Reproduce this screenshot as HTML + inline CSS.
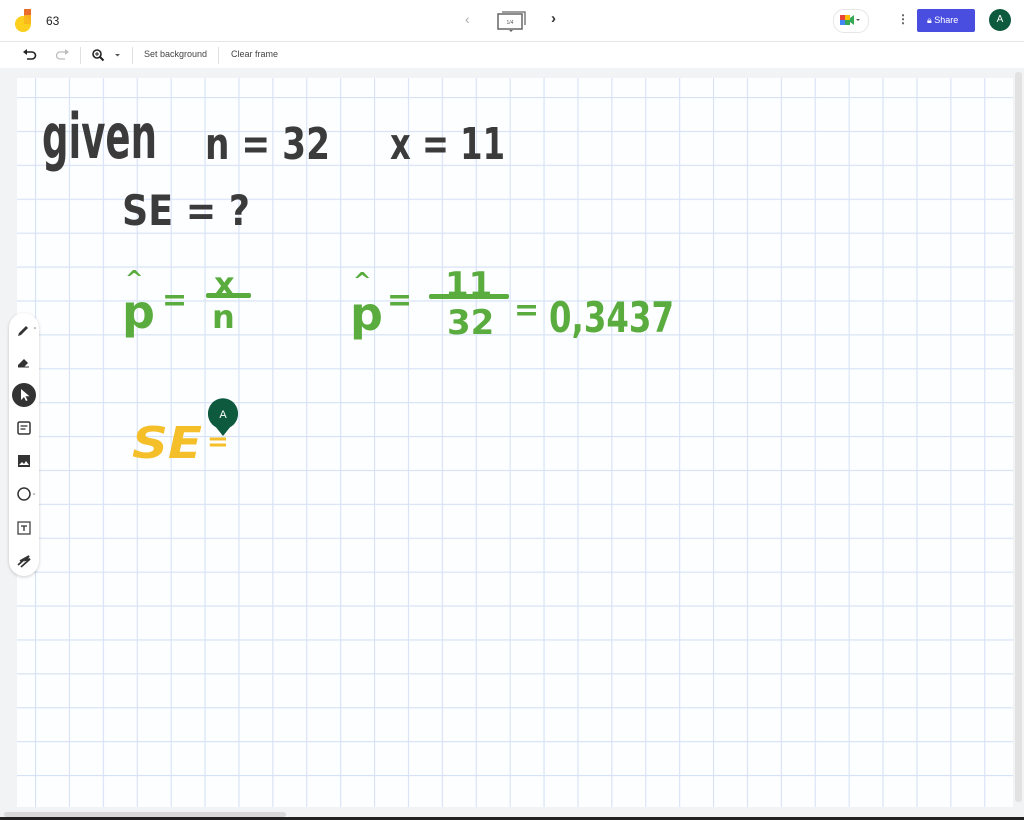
<!DOCTYPE html>
<html><head><meta charset="utf-8"><style>
body{margin:0;width:1024px;height:820px;overflow:hidden;background:#f1f3f4;font-family:"Liberation Sans",sans-serif;position:relative}
.top{position:absolute;left:0;top:0;width:1024px;height:41px;background:#fff;border-bottom:1px solid #e6e6e6}
.tb{position:absolute;left:0;top:42px;width:1024px;height:26px;background:#fff}
.tb span{position:absolute;top:7px;font-size:9px;color:#444}
.sep{position:absolute;top:5px;width:1px;height:17px;background:#e0e0e0}
svg{position:absolute}
</style></head><body>
<div class="top">
 <svg style="left:14px;top:9px" width="22" height="24"><rect x="10" y="0" width="7" height="7" fill="#ea6d2c"/><rect x="10" y="6" width="7" height="9" fill="#f7a21b"/><circle cx="9" cy="15" r="8" fill="#fbcf1c"/><rect x="10" y="6" width="7" height="9" fill="#f9b21b" opacity=".8"/></svg>
 <div style="position:absolute;left:46px;top:14px;font-size:12px;color:#222">63</div>
 <div style="position:absolute;left:465px;top:11px;font-size:14px;color:#aaa">‹</div>
 <svg style="left:496px;top:9px" width="32" height="24"><rect x="2" y="5" width="24" height="15" fill="none" stroke="#666" stroke-width="1.5"/><path d="M6 3H29V16" fill="none" stroke="#666" stroke-width="1.3"/><text x="14" y="15" font-size="5" text-anchor="middle" fill="#555">1/4</text><path d="M13 21l2 2 2-2" fill="#666"/></svg>
 <div style="position:absolute;left:551px;top:10px;font-size:15px;color:#333;font-weight:bold">›</div>
 <div style="position:absolute;left:833px;top:9px;width:34px;height:22px;border:1px solid #e6e6e6;border-radius:11px;background:#fff"></div>
 <svg style="left:840px;top:14px" width="22" height="12"><rect x="0" y="1" width="5" height="5" fill="#ea4335"/><rect x="0" y="6" width="5" height="5" fill="#4285f4"/><rect x="5" y="1" width="5" height="5" fill="#fbbc04"/><rect x="5" y="6" width="5" height="5" fill="#34a853"/><path d="M10 4l4-3v10l-4-3z" fill="#34a853"/><path d="M16 5h4l-2 2z" fill="#555"/></svg>
 <div style="position:absolute;left:897px;top:12px;font-size:12px;color:#555;font-weight:bold">⋮</div>
 <div style="position:absolute;left:917px;top:9px;width:58px;height:23px;background:#4a4ee0;border-radius:2px;color:#fff;font-size:9px;line-height:23px"><span style="margin-left:10px">🔒︎</span> Share</div>
 <div style="position:absolute;left:989px;top:9px;width:22px;height:22px;border-radius:50%;background:#0d5a3f;color:#fff;font-size:10px;text-align:center;line-height:22px">A</div>
</div>
<div class="tb">
 <svg style="left:22px;top:6px" width="50" height="14"><path d="M4 4h6a3.5 3.5 0 0 1 0 7H5" fill="none" stroke="#222" stroke-width="1.6"/><path d="M1 4l4-3v6z" fill="#222"/><path d="M44 4h-6a3.5 3.5 0 0 0 0 7h5" fill="none" stroke="#bbb" stroke-width="1.3"/><path d="M47 4l-4-3v6z" fill="#bbb"/></svg>
 <div class="sep" style="left:80px"></div>
 <svg style="left:91px;top:6px" width="32" height="14"><circle cx="6" cy="6" r="4" fill="none" stroke="#222" stroke-width="1.6"/><path d="M9 9l3.5 3.5" stroke="#222" stroke-width="2"/><path d="M4 6h4M6 4v4" stroke="#222" stroke-width="1"/><path d="M24 6h5l-2.5 2.5z" fill="#555"/></svg>
 <div class="sep" style="left:132px"></div>
 <span style="left:144px">Set background</span>
 <div class="sep" style="left:218px"></div>
 <span style="left:231px">Clear frame</span>
</div>
<div style="position:absolute;left:1015px;top:72px;width:7px;height:730px;background:#e2e2e2;border-radius:3px"></div>
<div style="position:absolute;left:4px;top:812px;width:282px;height:5px;background:#d9d9d9;border-radius:3px"></div>
<div style="position:absolute;left:0;top:817px;width:1024px;height:3px;background:#222"></div>
<svg style="left:17px;top:78px" width="996" height="729">
 <defs><pattern id="g" x="18" y="19" width="33.9" height="33.9" patternUnits="userSpaceOnUse"><rect width="33.9" height="33.9" fill="#fdfeff"/><path d="M0 0V33.9M0 0H33.9" stroke="#d6e2f6" stroke-width="2.2"/></pattern></defs>
 <rect width="996" height="729" fill="url(#g)"/>
 <g font-family="DejaVu Sans,sans-serif" font-weight="bold" fill="#3b3b3b">
  <text x="25" y="80" font-size="62" textLength="115" lengthAdjust="spacingAndGlyphs" font-weight="normal" style="font-weight:bold">given</text>
  <text x="188" y="81" font-size="44" textLength="125" lengthAdjust="spacingAndGlyphs">n = 32</text>
  <text x="373" y="81" font-size="44" textLength="115" lengthAdjust="spacingAndGlyphs">x = 11</text>
  <text x="105" y="147" font-size="42" textLength="128" lengthAdjust="spacingAndGlyphs">SE = ?</text>
 </g>
 <g font-family="DejaVu Sans,sans-serif" font-weight="bold" fill="#5aac3e">
  <text x="105" y="250" font-size="46">p</text>
  <text x="108" y="208" font-size="22">^</text>
  <text x="145" y="232" font-size="30">=</text>
  <text x="197" y="217" font-size="32">x</text>
  <rect x="189" y="215" width="45" height="5" rx="2"/>
  <text x="195" y="250" font-size="32">n</text>
  <text x="333" y="252" font-size="46">p</text>
  <text x="336" y="210" font-size="22">^</text>
  <text x="370" y="232" font-size="30">=</text>
  <text x="428" y="218" font-size="34">11</text>
  <rect x="412" y="216" width="80" height="5" rx="2"/>
  <text x="430" y="256" font-size="34">32</text>
  <text x="497" y="242" font-size="30">=</text>
  <text x="532" y="254" font-size="42" textLength="125" lengthAdjust="spacingAndGlyphs">0,3437</text>
 </g>
 <text x="115" y="380" font-family="DejaVu Sans,sans-serif" font-weight="bold" font-style="italic" font-size="44" fill="#f5bf2a" textLength="70" lengthAdjust="spacingAndGlyphs">SE</text>
 <text x="190" y="372" font-family="DejaVu Sans,sans-serif" font-weight="bold" font-size="26" fill="#f5bf2a">=</text>
 <path d="M206 358 L198 348 A15 15 0 1 1 214 348 Z" fill="#0d5a3f"/>
 <circle cx="206" cy="336" r="15" fill="#0d5a3f"/>
 <text x="206" y="340" font-size="11" fill="#fff" text-anchor="middle" font-family="Liberation Sans">A</text>
</svg>
<div style="position:absolute;left:9px;top:313px;width:30px;height:263px;background:#fff;border-radius:15px;box-shadow:0 1px 3px rgba(0,0,0,.2)"></div>
<svg style="left:9px;top:313px" width="32" height="263">
 <path d="M10 20l7-7 2 2-7 7-3 1z" fill="#333"/><circle cx="26" cy="15" r=".8" fill="#777"/>
 <path d="M9 52l6-6 4 4-4 4h-6z" fill="#333"/><path d="M9 54h11" stroke="#333"/>
 <circle cx="15" cy="82" r="12" fill="#333"/><path d="M12 76v11l3-3 2 4 1.5-.8-2-4h4z" fill="#fff"/>
 <rect x="9" y="109" width="12" height="12" rx="1.5" fill="none" stroke="#333" stroke-width="1.5"/><path d="M11.5 113h7M11.5 116h5" stroke="#333" stroke-width="1.2"/>
 <rect x="9" y="142" width="12" height="12" fill="#333"/><path d="M10 152l3-3 2 2 2-3 3 4z" fill="#fff"/>
 <circle cx="15" cy="181" r="6" fill="none" stroke="#333" stroke-width="1.5"/><circle cx="25" cy="181" r=".8" fill="#777"/>
 <rect x="9" y="209" width="12" height="12" fill="none" stroke="#333" stroke-width="1.2"/><path d="M12 213h6M15 213v5" stroke="#333" stroke-width="1.3"/>
 <path d="M9 252l8-7M11 248l9-5-3 4 4-1-9 8" stroke="#333" stroke-width="1.8" fill="none"/>
</svg>
</body></html>
